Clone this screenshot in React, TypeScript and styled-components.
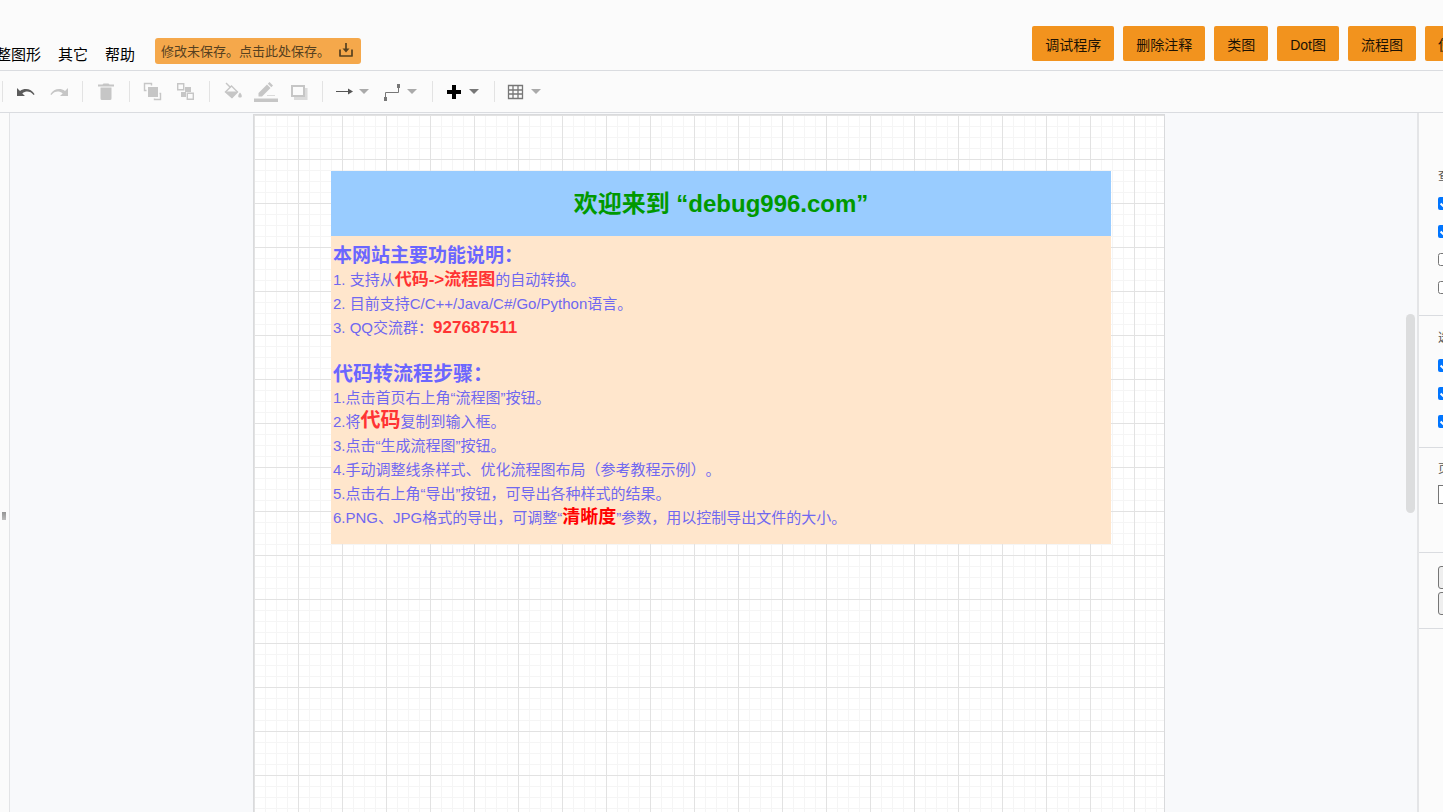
import React from "react";
import styled, { createGlobalStyle } from "styled-components";

const GlobalStyle = createGlobalStyle`
  * { box-sizing: border-box; }
  body {
    margin: 0;
    overflow: hidden;
    background: #fbfbfb;
    font-family: "Liberation Sans", "Noto Sans CJK SC", sans-serif;
    text-spacing-trim: space-all;
  }
  button, select { font-family: inherit; }
`;

const Shell = styled.div`
  display: flex;
  flex-direction: column;
  height: 100vh;
  overflow: hidden;
`;

const Header = styled.header`
  display: flex;
  justify-content: space-between;
  flex: none;
  height: 71px;
  overflow: hidden;
  border-bottom: 1px solid #dadce0;
`;

const MenuBar = styled.nav`
  display: flex;
  align-items: flex-start;
  gap: 17px;
  margin-left: -19px;
  padding-top: 38px;
`;

const MenuItem = styled.button`
  padding: 5px 0 0;
  border: 0;
  background: none;
  color: #000;
  font-size: 15px;
  line-height: 24px;
  white-space: nowrap;
`;

const SaveNotice = styled.button`
  display: flex;
  align-items: center;
  gap: 8px;
  height: 26px;
  margin-left: 3px;
  padding: 0 7px 0 6px;
  border: 0;
  border-radius: 3px;
  background: #f5a84b;
  color: #56401f;
  font-size: 13px;
  line-height: 26px;
  white-space: nowrap;

  span { padding-top: 2px; }
`;

const Actions = styled.div`
  display: flex;
  gap: 9px;
  flex: none;
  margin-right: -64px;
  padding-top: 26px;
`;

const ActionButton = styled.button`
  height: 35px;
  padding: 0 13px;
  border: 0;
  border-radius: 2px;
  background: #f2931e;
  color: #1c1204;
  font-size: 14px;
  white-space: nowrap;
`;

const Toolbar = styled.div`
  display: flex;
  align-items: center;
  flex: none;
  height: 42px;
  padding-left: 2px;
  border-bottom: 1px solid #dadce0;
`;

const ToolGroup = styled.div`
  display: flex;
  padding: 0 7px 0 6px;
  border-left: 1px solid #e3e3e3;
`;

const ToolButton = styled.button<{ $tone?: string }>`
  display: flex;
  align-items: center;
  justify-content: center;
  width: 33px;
  height: 21px;
  padding: 0;
  border: 0;
  background: none;
  color: ${(p) => p.$tone ?? "#c6c6c6"};
`;

const DropButton = styled(ToolButton)`
  justify-content: flex-start;
  gap: 6px;
  width: 48px;
  padding-left: 6px;
`;

const Workspace = styled.div`
  display: flex;
  flex: 1;
  min-height: 0;
`;

const Splitter = styled.div`
  display: flex;
  align-items: center;
  flex: none;
  width: 10px;
  padding: 106px 0 0 2px;
  border-right: 1px solid #e3e4e6;
`;

const Grip = styled.div`
  width: 4px;
  height: 8px;
  background: linear-gradient(#949494, #bdbdbd);
`;

const Canvas = styled.main`
  display: flex;
  justify-content: center;
  flex: 1;
  min-width: 0;
  padding: 1px 0 0 2px;
  background: #f8f9fb;
`;

const Sheet = styled.div`
  width: 100%;
  max-width: 912px;
  padding: 56px 53px 0 77px;
  border: 1px solid #d9dadc;
  border-bottom: 0;
  background-color: #fff;
  background-image:
    linear-gradient(to right, #e2e2e2 1px, transparent 1px),
    linear-gradient(#e2e2e2 1px, transparent 1px),
    linear-gradient(to right, #f5f5f5 1px, transparent 1px),
    linear-gradient(#f5f5f5 1px, transparent 1px);
  background-size: 44px 44px, 44px 44px, 11px 11px, 11px 11px;
`;

const CardTitle = styled.h1`
  margin: 0;
  background: #99ccff;
  color: #009900;
  font-size: 24px;
  line-height: 65px;
  text-align: center;
`;

const CardBody = styled.div`
  display: flex;
  flex-direction: column;
  gap: 22px;
  padding: 8px 2px 14px;
  background: #ffe6cc;
  color: #7068f0;
`;

const Heading = styled.h2<{ $size: number }>`
  height: 24px;
  margin: 0;
  color: #6b66ff;
  font-size: ${(p) => p.$size}px;
  line-height: 24px;
`;

const Line = styled.p`
  height: 24px;
  margin: 0;
  font-size: 15px;
  line-height: 24px;
  white-space: nowrap;
`;

const Strong = styled.strong<{ $size: number; $color?: string }>`
  color: ${(p) => p.$color ?? "#ff3333"};
  font-size: ${(p) => p.$size}px;
  line-height: 1;
`;

const ScrollTrack = styled.div`
  flex: none;
  width: 11px;
  padding-top: 201px;
  background: #f8f9fb;
`;

const ScrollThumb = styled.div`
  width: 9px;
  height: 199px;
  border-radius: 5px;
  background: #dcddde;
`;

const Panel = styled.aside`
  flex: none;
  width: 26px;
  overflow: hidden;
  border-left: 2px solid #e4e5e7;
  color: #555;
  font-size: 12px;
`;

const Section = styled.section<{ $top: number; $bottom: number }>`
  width: 240px;
  padding: ${(p) => p.$top}px 0 ${(p) => p.$bottom}px 19px;
  border-bottom: 1px solid #dadce0;
`;

const SectionTitle = styled.h3`
  display: block;
  margin: 0 0 3px;
  font-size: 12px;
  font-weight: 400;
  line-height: 20px;
`;

const Option = styled.label`
  display: flex;
  align-items: center;
  gap: 6px;
  height: 28px;

  input { width: 13px; height: 13px; margin: 0; }
`;

const PaperSelect = styled.select`
  display: block;
  width: 200px;
  height: 19px;
  margin-top: 6px;
  border: 1px solid #767676;
  background: #fff;
  font-size: 12px;
`;

const PanelButton = styled.button`
  display: block;
  width: 200px;
  height: 23px;
  margin-bottom: 3px;
  border: 1px solid #767676;
  border-radius: 3px;
  background: #efefef;
  font-size: 12px;
`;

const Icon = ({ children, size = 20 }: { children: React.ReactNode; size?: number }) => (
  <svg width={size} height="20" viewBox={`0 0 ${size} 20`} fill="none" stroke="currentColor" aria-hidden="true">
    {children}
  </svg>
);

const Caret = ({ color = "#aaa" }: { color?: string }) => (
  <svg width="10" height="5" viewBox="0 0 10 5" aria-hidden="true">
    <path d="M0 0h10L5 5z" fill={color} />
  </svg>
);

const actions = ["调试程序", "删除注释", "类图", "Dot图", "流程图", "使用教程"];

export default function App() {
  return (
    <Shell>
      <GlobalStyle />
      <Header>
        <MenuBar>
          <MenuItem>调整图形</MenuItem>
          <MenuItem>其它</MenuItem>
          <MenuItem>帮助</MenuItem>
          <SaveNotice>
            <span>修改未保存。点击此处保存。</span>
            <svg width="16" height="16" viewBox="0 0 16 16" fill="none" stroke="currentColor" strokeWidth="1.7" aria-hidden="true">
              <path d="M2 6.500v6.500h12V6.500" strokeLinejoin="round" />
              <path d="M8 0v7" />
              <path d="M4.500 5.500h7L8 9.500z" fill="currentColor" stroke="none" />
            </svg>
          </SaveNotice>
        </MenuBar>
        <Actions>
          {actions.map((a) => (
            <ActionButton key={a}>{a}</ActionButton>
          ))}
        </Actions>
      </Header>

      <Toolbar role="toolbar" aria-label="工具栏">
        <ToolGroup>
          <ToolButton $tone="#5c5c5c" aria-label="撤销">
            <Icon>
              <path d="M1 6v8h8L6.300 11.400C10 8.600 14.500 9 17.600 13l1-.8C15.500 7 9 5.500 4 9z" fill="currentColor" stroke="none" />
            </Icon>
          </ToolButton>
          <ToolButton aria-label="重做">
            <Icon>
              <path d="M19 6v8h-8l2.700-2.600C10 8.600 5.500 9 2.400 13l-1-.8C4.500 7 11 5.500 16 9z" fill="currentColor" stroke="none" />
            </Icon>
          </ToolButton>
        </ToolGroup>
        <ToolGroup>
          <ToolButton aria-label="删除">
            <Icon>
              <path d="M2 2.500h4.500l1-1h5l1 1H18v2H2zM4.500 5.500h11v11q0 1.500-1.500 1.500H6q-1.500 0-1.500-1.500z" fill="currentColor" stroke="none" />
            </Icon>
          </ToolButton>
        </ToolGroup>
        <ToolGroup>
          <ToolButton aria-label="移至最前">
            <Icon>
              <path d="M5 5h10v10H5z" fill="currentColor" stroke="none" />
              <path d="M3.500 8.500h-2v-7h7v2M16.500 11.500h1v6h-6v-1" strokeWidth="1.400" />
            </Icon>
          </ToolButton>
          <ToolButton aria-label="移至最后">
            <Icon>
              <path d="M9 5h6v5h-5v5H5v-5h4z" fill="currentColor" stroke="none" />
              <path d="M1.700 1.700h6v6h-6zM11.300 11.300h6v6h-6z" strokeWidth="1.400" />
            </Icon>
          </ToolButton>
        </ToolGroup>
        <ToolGroup>
          <ToolButton aria-label="填充颜色">
            <Icon>
              <path d="M3 1l4.500 4.500" strokeWidth="1.400" />
              <path d="M8.500 4l6 6-5.500 5.500L2.500 10z" strokeWidth="1.400" />
              <path d="M2 9.500h13l-6.200 6.800z" fill="currentColor" stroke="none" />
              <path d="M17 10.500c2.500 3 2.300 5 0 5s-2.500-2 0-5z" fill="currentColor" stroke="none" />
            </Icon>
          </ToolButton>
          <ToolButton aria-label="线条颜色">
            <Icon size={24}>
              <path d="M0 16.500h24V20H0z" fill="currentColor" stroke="none" />
              <path d="M4.500 11L13 2.500l3.500 3.500L8 14.500H4.500zM13.800 1.700L15.500 0 19 3.500l-1.700 1.700z" fill="currentColor" stroke="none" />
              <path d="M13 13.500h8" opacity=".6" />
            </Icon>
          </ToolButton>
          <ToolButton aria-label="阴影">
            <Icon>
              <path d="M5 16.500h12V6" strokeWidth="3" opacity=".6" />
              <path d="M3 4h12v10H3z" strokeWidth="2" />
            </Icon>
          </ToolButton>
        </ToolGroup>
        <ToolGroup>
          <DropButton $tone="#555" aria-label="连接">
            <Icon size={18}>
              <path d="M1 9.500h14" />
              <path d="M13 6.500l5 3-5 3z" fill="currentColor" stroke="none" />
            </Icon>
            <Caret />
          </DropButton>
          <DropButton $tone="#777" aria-label="航点">
            <Icon size={18}>
              <path d="M2.500 16v-5.500h13V4" />
              <path d="M1 15h3v4H1zM14 2h3v4h-3z" fill="currentColor" stroke="none" />
            </Icon>
            <Caret />
          </DropButton>
        </ToolGroup>
        <ToolGroup>
          <DropButton $tone="#000" aria-label="插入">
            <Icon size={18}>
              <path d="M9 3v14M2 10h14" strokeWidth="4" />
            </Icon>
            <Caret color="#777" />
          </DropButton>
        </ToolGroup>
        <ToolGroup>
          <DropButton $tone="#777" aria-label="表格">
            <Icon size={18}>
              <path d="M1.500 3.500h14v13h-14zM6 3.500v13M11 3.500v13M1.500 8h14M1.500 12h14" strokeWidth="1.300" />
            </Icon>
            <Caret />
          </DropButton>
        </ToolGroup>
      </Toolbar>

      <Workspace>
        <Splitter>
          <Grip />
        </Splitter>
        <Canvas>
          <Sheet>
            <CardTitle>欢迎来到 “debug996.com”</CardTitle>
            <CardBody>
              <div>
                <Heading $size={19}>本网站主要功能说明：</Heading>
                <Line>1. 支持从<Strong $size={17}>代码-&gt;流程图</Strong>的自动转换。</Line>
                <Line>2. 目前支持C/C++/Java/C#/Go/Python语言。</Line>
                <Line>3. QQ交流群：<Strong $size={17}>927687511</Strong></Line>
              </div>
              <div>
                <Heading $size={20}>代码转流程步骤：</Heading>
                <Line>1.点击首页右上角“流程图”按钮。</Line>
                <Line>2.将<Strong $size={20}>代码</Strong>复制到输入框。</Line>
                <Line>3.点击“生成流程图”按钮。</Line>
                <Line>4.手动调整线条样式、优化流程图布局（参考教程示例）。</Line>
                <Line>5.点击右上角“导出”按钮，可导出各种样式的结果。</Line>
                <Line>6.PNG、JPG格式的导出，可调整“<Strong $size={18} $color="#ff0000">清晰度</Strong>”参数，用以控制导出文件的大小。</Line>
              </div>
            </CardBody>
          </Sheet>
        </Canvas>
        <ScrollTrack>
          <ScrollThumb />
        </ScrollTrack>
        <Panel>
          <Section $top={53} $bottom={14}>
            <SectionTitle>查看</SectionTitle>
            <Option><input type="checkbox" defaultChecked />网格</Option>
            <Option><input type="checkbox" defaultChecked />页面视图</Option>
            <Option><input type="checkbox" />背景</Option>
            <Option><input type="checkbox" />阴影</Option>
          </Section>
          <Section $top={12} $bottom={12}>
            <SectionTitle>选项</SectionTitle>
            <Option><input type="checkbox" defaultChecked />连接箭头</Option>
            <Option><input type="checkbox" defaultChecked />连接点</Option>
            <Option><input type="checkbox" defaultChecked />参考线</Option>
          </Section>
          <Section $top={11} $bottom={48}>
            <SectionTitle as="label" htmlFor="paper">页面尺寸</SectionTitle>
            <PaperSelect id="paper"><option>A4</option></PaperSelect>
          </Section>
          <Section $top={13} $bottom={10}>
            <PanelButton>编辑数据</PanelButton>
            <PanelButton>清除默认样式</PanelButton>
          </Section>
        </Panel>
      </Workspace>
    </Shell>
  );
}
